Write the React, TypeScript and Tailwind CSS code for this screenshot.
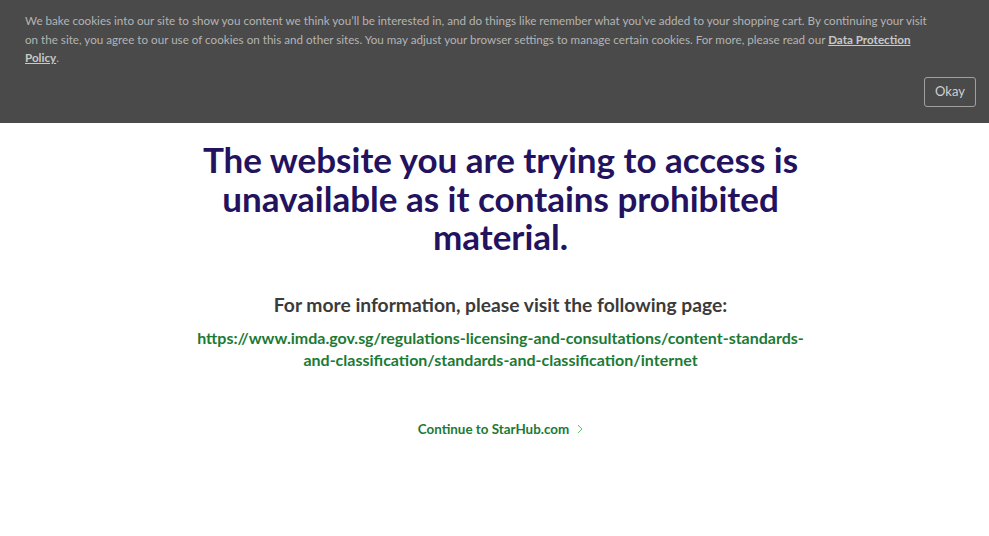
export default function App() {
  return (
    <div
      style={{ fontFamily: "Lato, 'Open Sans', sans-serif" }}
      className="min-h-[536px] bg-white"
    >
      <div className="h-[123px] bg-[#4a4a4a] relative">
        <p className="pl-[25px] pt-[12px] w-[935px] text-[11.65px] leading-[18.5px] text-[#b4b4b4]">
          We bake cookies into our site to show you content we think you’ll be interested in, and do things like
          remember what you’ve added to your shopping cart. By continuing your visit on the site, you agree to our use
          of cookies on this and other sites. You may adjust your browser settings to manage certain cookies. For more,
          please read our{' '}
          <a className="font-bold underline text-[#c8c8c8] cursor-pointer">Data Protection Policy</a>.
        </p>
        <button className="absolute right-[13px] top-[77px] w-[52px] h-[30px] border border-[#a0a0a0] rounded-[3px] text-[13px] text-[#d0d0d0]">
          Okay
        </button>
      </div>
      <div className="pl-[12px] flex flex-col items-center text-center">
        <h1 className="mt-[17px] w-[620px] text-[35px] leading-[38.5px] font-bold text-[#23125e]">
          The website you are trying to access is unavailable as it contains prohibited material.
        </h1>
        <p className="mt-[37px] text-[19.25px] leading-[24px] font-bold text-[#3b3b3b]">
          For more information, please visit the following page:
        </p>
        <a className="mt-[10px] w-[620px] text-[16px] leading-[22px] font-bold text-[#1b7a34] cursor-pointer">
          https://www.imda.gov.sg/regulations-licensing-and-consultations/content-standards-and-classification/standards-and-classification/internet
        </a>
        <a className="mt-[48px] flex items-center gap-[8px] text-[13.4px] leading-[20px] font-bold text-[#1b7a34] cursor-pointer">
          Continue to StarHub.com
          <svg width="6" height="10" viewBox="0 0 6 10" fill="none">
            <path d="M1 1l4 4-4 4" stroke="#5ac85a" strokeWidth="1" />
          </svg>
        </a>
      </div>
    </div>
  )
}
